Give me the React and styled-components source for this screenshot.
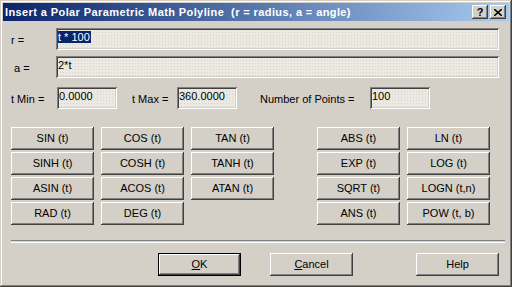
import React from "react";
import styled, { createGlobalStyle } from "styled-components";

const Global = createGlobalStyle`
  html, body { margin: 0; padding: 0; background: #d4d0c8; }
  body { font-family: "Liberation Sans", Arial, sans-serif; font-size: 11px; color: #000; }
`;

const Window = styled.div`
  width: 512px;
  height: 287px;
  box-sizing: border-box;
  padding: 3px;
  background: #d4d0c8;
  box-shadow: inset -1px -1px #404040, inset 1px 1px #d4d0c8,
    inset -2px -2px #808080, inset 2px 2px #ffffff;
  display: flex;
  flex-direction: column;
`;

const TitleBar = styled.div`
  height: 18px;
  flex: none;
  background: linear-gradient(to right, #0a246a, #a6caf0);
  display: flex;
  align-items: center;
  padding: 0 3px 0 2px;
`;

const Title = styled.div`
  flex: 1;
  color: #fff;
  font-weight: bold;
  font-size: 11px;
  white-space: pre;
  letter-spacing: 0.4px;
`;

const CaptionButton = styled.div`
  width: 16px;
  height: 14px;
  box-sizing: border-box;
  background: #d4d0c8;
  box-shadow: inset -1px -1px #404040, inset 1px 1px #ffffff,
    inset -2px -2px #808080;
  display: flex;
  align-items: center;
  justify-content: center;
  margin-left: ${(p) => (p.$gap ? "2px" : "0")};
  font-weight: bold;
  font-size: 11px;
  line-height: 1;
  color: #000;
`;

const Body = styled.div`
  flex: 1;
  display: flex;
  flex-direction: column;
  padding: 7px 10px 0 8px;
`;

const FieldRow = styled.div`
  display: flex;
  align-items: center;
  height: 22px;
  margin-bottom: ${(p) => p.$mb || 0}px;
`;

const Label = styled.div`
  width: ${(p) => p.$w}px;
  flex: none;
  white-space: pre;
  padding-top: 1px;
`;

const TextBox = styled.div`
  box-sizing: border-box;
  height: 22px;
  width: ${(p) => (p.$w ? `${p.$w}px` : "auto")};
  flex: ${(p) => (p.$w ? "none" : "1")};
  padding: 3px 3px 0 2px;
  background-color: #ebe9e2;
  background-image: radial-gradient(circle, #d6d3cb 0.7px, transparent 0.8px);
  background-size: 3px 3px;
  box-shadow: inset 1px 1px #808080, inset -1px -1px #ffffff,
    inset 2px 2px #404040, inset -2px -2px #d4d0c8;
  white-space: pre;
  line-height: 13px;
`;

const Selected = styled.span`
  background: #0a246a;
  color: #fff;
  padding: 0 1px 0 0;
`;

const Keypad = styled.div`
  display: flex;
  justify-content: space-between;
  margin-top: 18px;
  padding-right: 9px;
`;

const KeyGrid = styled.div`
  display: grid;
  grid-template-columns: repeat(${(p) => p.$cols}, 83px);
  grid-auto-rows: 23px;
  column-gap: 7px;
  row-gap: 2px;
`;

const Button = styled.div`
  box-sizing: border-box;
  height: 23px;
  width: 83px;
  background: #d4d0c8;
  box-shadow: ${(p) =>
    p.$default
      ? "inset 1px 1px #000, inset -1px -1px #000, inset -2px -2px #404040, inset 2px 2px #ffffff, inset -3px -3px #808080"
      : "inset -1px -1px #404040, inset 1px 1px #ffffff, inset -2px -2px #808080"};
  display: flex;
  align-items: center;
  justify-content: center;
  padding-bottom: 1px;
  white-space: pre;
  color: #000;
`;

const Separator = styled.div`
  margin: 15px -6px 0 0;
  height: 1px;
  border-top: 1px solid #808080;
  border-bottom: 1px solid #ffffff;
`;

const Footer = styled.div`
  display: flex;
  margin-top: 10px;
  padding-left: 147px;
`;

const Spacer = styled.div`
  width: ${(p) => p.$w}px;
  flex: none;
`;

const U = styled.span`
  text-decoration: underline;
`;

const left = [
  "SIN (t)", "COS (t)", "TAN (t)",
  "SINH (t)", "COSH (t)", "TANH (t)",
  "ASIN (t)", "ACOS (t)", "ATAN (t)",
  "RAD (t)", "DEG (t)",
];
const right = [
  "ABS (t)", "LN (t)",
  "EXP (t)", "LOG (t)",
  "SQRT (t)", "LOGN (t,n)",
  "ANS (t)", "POW (t, b)",
];

export default function App() {
  return (
    <>
      <Global />
      <Window>
        <TitleBar>
          <Title>{"Insert a Polar Parametric Math Polyline  (r = radius, a = angle)"}</Title>
          <CaptionButton>?</CaptionButton>
          <CaptionButton $gap>
            <svg width="8" height="7" viewBox="0 0 8 7">
              <path d="M0 0 L8 7 M8 0 L0 7" stroke="#000" strokeWidth="1.6" />
            </svg>
          </CaptionButton>
        </TitleBar>
        <Body>
          <FieldRow $mb={6}>
            <Label $w={45}>{"r ="}</Label>
            <TextBox><Selected>{"t * 100"}</Selected></TextBox>
          </FieldRow>
          <FieldRow $mb={9}>
            <Label $w={45}>{" a ="}</Label>
            <TextBox>{"2*t"}</TextBox>
          </FieldRow>
          <FieldRow>
            <Label $w={46}>{"t Min ="}</Label>
            <TextBox $w={60}>{"0.0000"}</TextBox>
            <Spacer $w={15} />
            <Label $w={45}>{"t Max ="}</Label>
            <TextBox $w={60}>{"360.0000"}</TextBox>
            <Spacer $w={23} />
            <Label $w={110}>{"Number of Points ="}</Label>
            <TextBox $w={60}>{"100"}</TextBox>
          </FieldRow>
          <Keypad>
            <KeyGrid $cols={3}>
              {left.map((t) => (
                <Button key={t}>{t}</Button>
              ))}
            </KeyGrid>
            <KeyGrid $cols={2}>
              {right.map((t) => (
                <Button key={t}>{t}</Button>
              ))}
            </KeyGrid>
          </Keypad>
          <Separator />
          <Footer>
            <Button $default><U>O</U>K</Button>
            <Spacer $w={29} />
            <Button><U>C</U>ancel</Button>
            <Spacer $w={63} />
            <Button>Help</Button>
          </Footer>
        </Body>
      </Window>
    </>
  );
}
